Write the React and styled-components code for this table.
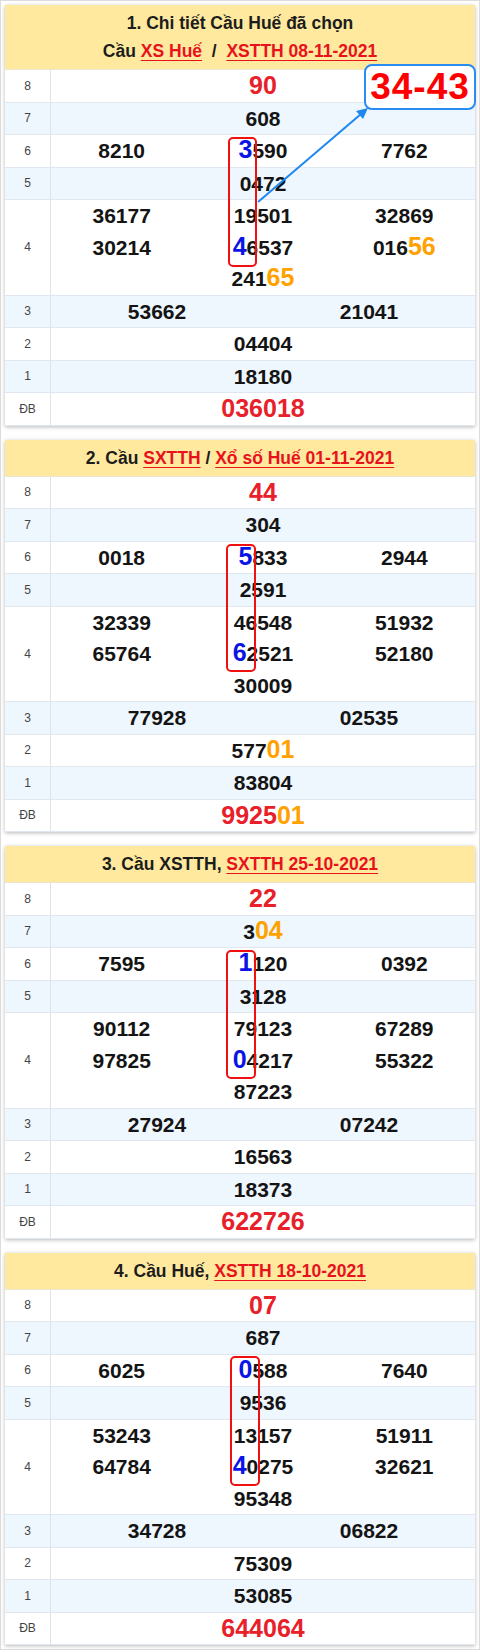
import React from "react";
import styled, { createGlobalStyle } from "styled-components";

const GlobalStyle = createGlobalStyle`
    body {
        margin: 0;
        background: #fff;
        font-family: "Liberation Sans", Arial, sans-serif;
    }
`;

const Page = styled.div`
    border: 1px solid #dcdcdc;
    padding: 4px;
    width: 480px;
    box-sizing: border-box;
`;

const Card = styled.div`
    position: relative;
    background: #fff;
    box-shadow: 0 1px 4px rgba(0, 0, 0, 0.28);
    margin-bottom: 14px;
    &:last-child {
        margin-bottom: 0;
    }
`;

const Header = styled.div`
    background: #fee99f;
    text-align: center;
    font-weight: bold;
    font-size: 17.5px;
    line-height: 28px;
    padding: 4px 0 4px;
    color: #1c1c1c;
    border-bottom: 1px solid #ece6d0;
`;

const HLink = styled.span`
    color: #e8121c;
    text-decoration: underline;
    text-underline-offset: 3px;
`;

const Body = styled.div`
    position: relative;
`;

const Row = styled.div`
    display: grid;
    grid-template-columns: 46px 1fr;
    background: ${p => (p.$alt ? "#eef6fe" : "#fff")};
    border-bottom: 1px solid #e1e7ee;
    &:last-child {
        border-bottom: none;
    }
`;

const Label = styled.div`
    display: flex;
    align-items: center;
    justify-content: center;
    border-right: 1px solid #dfe3e8;
    font-size: 12px;
    color: #444;
`;

const Cells = styled.div`
    display: grid;
    grid-template-columns: repeat(${p => p.$cols}, 1fr);
    grid-auto-rows: 31.5px;
`;

const Num = styled.div`
    text-align: center;
    font-weight: bold;
    font-size: ${p => (p.$big ? "25px" : "21px")};
    line-height: 31.5px;
    color: ${p => (p.$red ? "#e8202a" : "#141414")};
    white-space: nowrap;
    &.full {
        grid-column: 1 / -1;
    }
`;

const Blue = styled.span`
    color: #0a14e6;
    font-size: 25px;
    line-height: 1;
`;

const Orange = styled.span`
    color: #ffa200;
    font-size: 25px;
    line-height: 1;
`;

const Frame = styled.div`
    position: absolute;
    box-sizing: border-box;
    border: 2px solid #f01010;
    border-radius: 5px;
    pointer-events: none;
`;

const Callout = styled.div`
    position: absolute;
    left: 359px;
    top: 59px;
    width: 112px;
    height: 46px;
    box-sizing: border-box;
    border: 2px solid #2a8cf2;
    border-radius: 8px;
    background: #fff;
    display: flex;
    align-items: center;
    justify-content: center;
    color: #ff0000;
    font-weight: bold;
    font-size: 37px;
    letter-spacing: 1px;
    z-index: 2;
`;

const ArrowSvg = styled.svg`
    position: absolute;
    left: 0;
    top: 0;
    pointer-events: none;
    z-index: 1;
`;

// parse "{..}" orange, "[..]" blue segments
const fmt = s => {
    const parts = s.split(/(\{[^}]*\}|\[[^\]]*\])/).filter(Boolean);
    return parts.map((p, i) => {
        if (p[0] === "{") return <Orange key={i}>{p.slice(1, -1)}</Orange>;
        if (p[0] === "[") return <Blue key={i}>{p.slice(1, -1)}</Blue>;
        return <React.Fragment key={i}>{p}</React.Fragment>;
    });
};

const cards = [
    {
        title: (
            <>
                1. Chi tiết Cầu Huế đã chọn
                <br />
                Cầu <HLink>XS Huế</HLink> &nbsp;/&nbsp; <HLink>XSTTH 08-11-2021</HLink>
            </>
        ),
        frame: { left: 223, top: 67, width: 29, height: 130 },
        callout: true,
        r8: "90", r7: "608",
        r6: ["8210", "[3]590", "7762"], r5: "0472",
        r4: ["36177", "19501", "32869", "30214", "[4]6537", "016{56}", "241{65}"],
        r3: ["53662", "21041"], r2: "04404", r1: "18180", db: "036018",
    },
    {
        title: (
            <>
                2. Cầu <HLink>SXTTH</HLink> / <HLink>Xổ số Huế 01-11-2021</HLink>
            </>
        ),
        frame: { left: 221, top: 67, width: 30, height: 128 },
        r8: "44", r7: "304",
        r6: ["0018", "[5]833", "2944"], r5: "2591",
        r4: ["32339", "46548", "51932", "65764", "[6]2521", "52180", "30009"],
        r3: ["77928", "02535"], r2: "577{01}", r1: "83804", db: "9925{01}",
    },
    {
        title: (
            <>
                3. Cầu XSTTH, <HLink>SXTTH 25-10-2021</HLink>
            </>
        ),
        frame: { left: 221, top: 67, width: 30, height: 129 },
        r8: "22", r7: "3{04}",
        r6: ["7595", "[1]120", "0392"], r5: "3128",
        r4: ["90112", "79123", "67289", "97825", "[0]4217", "55322", "87223"],
        r3: ["27924", "07242"], r2: "16563", r1: "18373", db: "622726",
    },
    {
        title: (
            <>
                4. Cầu Huế, <HLink>XSTTH 18-10-2021</HLink>
            </>
        ),
        frame: { left: 225, top: 66, width: 30, height: 130 },
        r8: "07", r7: "687",
        r6: ["6025", "[0]588", "7640"], r5: "9536",
        r4: ["53243", "13157", "51911", "64784", "[4]0275", "32621", "95348"],
        r3: ["34728", "06822"], r2: "75309", r1: "53085", db: "644064",
    },
];

const ResultCard = ({ c }) => (
    <Card>
        <Header>{c.title}</Header>
        <Body>
            <Row>
                <Label>8</Label>
                <Cells $cols={1}><Num $big $red>{fmt(c.r8)}</Num></Cells>
            </Row>
            <Row $alt>
                <Label>7</Label>
                <Cells $cols={1}><Num>{fmt(c.r7)}</Num></Cells>
            </Row>
            <Row>
                <Label>6</Label>
                <Cells $cols={3}>
                    {c.r6.map((n, i) => <Num key={i}>{fmt(n)}</Num>)}
                </Cells>
            </Row>
            <Row $alt>
                <Label>5</Label>
                <Cells $cols={1}><Num>{fmt(c.r5)}</Num></Cells>
            </Row>
            <Row>
                <Label>4</Label>
                <Cells $cols={3}>
                    {c.r4.map((n, i) => (
                        <Num key={i} className={i === 6 ? "full" : undefined}>{fmt(n)}</Num>
                    ))}
                </Cells>
            </Row>
            <Row $alt>
                <Label>3</Label>
                <Cells $cols={2}>
                    {c.r3.map((n, i) => <Num key={i}>{fmt(n)}</Num>)}
                </Cells>
            </Row>
            <Row>
                <Label>2</Label>
                <Cells $cols={1}><Num>{fmt(c.r2)}</Num></Cells>
            </Row>
            <Row $alt>
                <Label>1</Label>
                <Cells $cols={1}><Num>{fmt(c.r1)}</Num></Cells>
            </Row>
            <Row>
                <Label>ĐB</Label>
                <Cells $cols={1}><Num $big $red>{fmt(c.db)}</Num></Cells>
            </Row>
            <Frame style={c.frame} />
        </Body>
        {c.callout && (
            <>
                <ArrowSvg width="470" height="210" viewBox="0 0 470 210">
                    <line x1="253" y1="197" x2="356" y2="109" stroke="#1f88f0" strokeWidth="2" />
                    <polygon points="363,103 351,106 358,114" fill="#1f88f0" />
                </ArrowSvg>
                <Callout>34-43</Callout>
            </>
        )}
    </Card>
);

export default function App() {
    return (
        <>
            <GlobalStyle />
            <Page>
                {cards.map((c, i) => (
                    <ResultCard key={i} c={c} />
                ))}
            </Page>
        </>
    );
}
